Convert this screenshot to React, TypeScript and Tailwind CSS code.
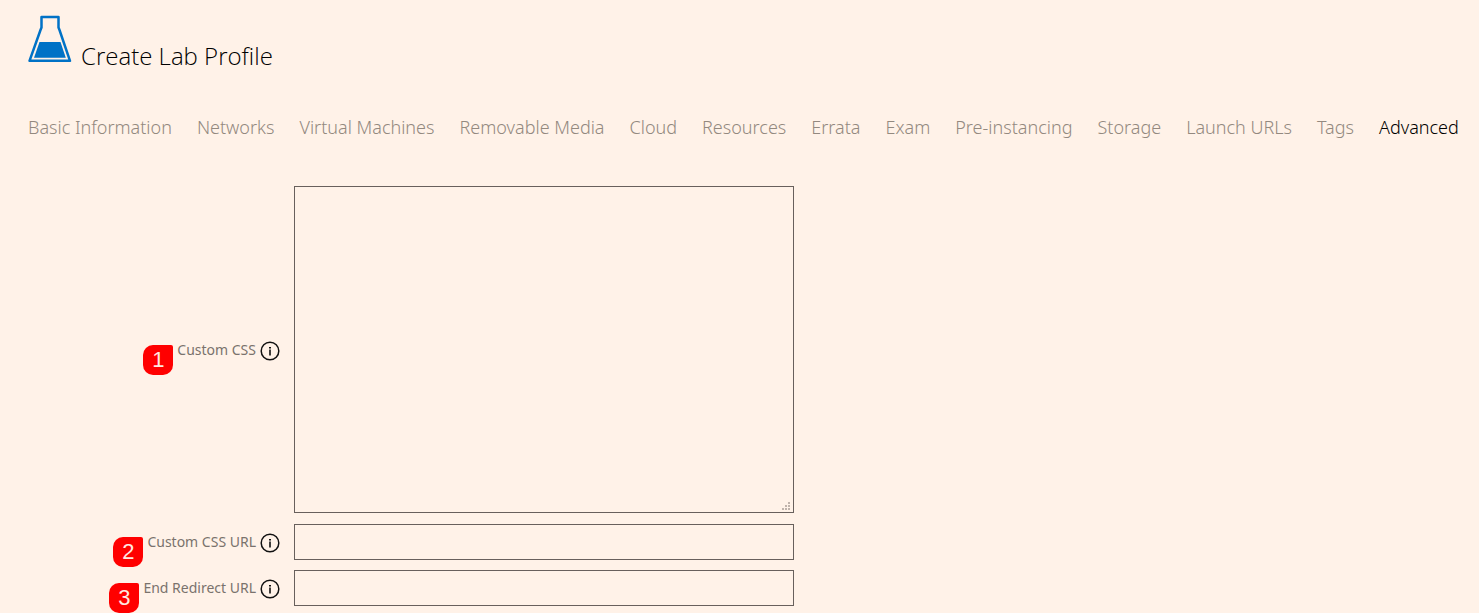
import React from "react";

const tabs = [
  "Basic Information",
  "Networks",
  "Virtual Machines",
  "Removable Media",
  "Cloud",
  "Resources",
  "Errata",
  "Exam",
  "Pre-instancing",
  "Storage",
  "Launch URLs",
  "Tags",
  "Advanced",
];

function FlaskIcon() {
  return (
    <svg width="44" height="48" viewBox="0 0 44 48" aria-hidden="true" className="shrink-0">
      <path
        d="M13.5 2h17v10.5L31.5 15 42 45.8H1.5L12.5 15l1-2.5z"
        fill="none"
        stroke="#0072c6"
        strokeWidth="2.5"
        strokeLinejoin="round"
      />
      <path d="M11.5 27h21l5.3 15.8H6z" fill="#0072c6" />
    </svg>
  );
}

function InfoIcon() {
  return (
    <svg width="20" height="20" viewBox="0 0 20 20" aria-hidden="true">
      <circle cx="10" cy="10" r="8.8" fill="none" stroke="#111" strokeWidth="1.5" />
      <rect x="9" y="6" width="2" height="1.5" fill="#111" />
      <rect x="9.2" y="8.5" width="1.6" height="6" fill="#111" />
    </svg>
  );
}

function FieldLabel({ id, step, text }: { id: string; step: number; text: string }) {
  return (
    <div className="flex items-center justify-end gap-1">
      <label
        htmlFor={id}
        className="relative font-['Noto_Sans',sans-serif] text-sm leading-5 text-[#7a726d]"
      >
        <span className="absolute top-[5px] right-full mr-1 flex size-[30px] items-center justify-center rounded-[10px] rounded-tr-[2px] bg-[#ff0000] font-['Liberation_Sans',sans-serif] text-[22px] text-[#ffe8e0]">
          {step}
        </span>
        {text}
      </label>
      <button type="button" aria-label={`About ${text}`} className="pt-px">
        <InfoIcon />
      </button>
    </div>
  );
}

export default function App() {
  return (
    <main className="min-h-screen bg-[#fff2e8] px-7 pt-[15px] font-['Open_Sans',sans-serif]">
      <header className="flex items-start gap-[9px]">
        <FlaskIcon />
        <h1 className="pt-[25px] text-2xl leading-8 font-light text-black">Create Lab Profile</h1>
      </header>
      <nav className="mt-[39px] flex gap-[25px] font-['Noto_Sans',sans-serif] text-lg leading-8 font-light whitespace-nowrap text-[#93897f]">
        {tabs.map((tab) => (
          <a
            key={tab}
            href="#"
            aria-current={tab === "Advanced" ? "page" : undefined}
            className="aria-[current=page]:text-black"
          >
            {tab}
          </a>
        ))}
      </nav>
      <form className="mt-[43px] grid grid-cols-[252px_minmax(0,500px)] gap-x-[14px] gap-y-[10px]">
        <FieldLabel id="css" step={1} text="Custom CSS" />
        <div className="relative pb-px">
          <textarea
            id="css"
            className="block h-[327px] w-full resize border border-[#68605c] bg-transparent p-2 text-sm [&::-webkit-resizer]:bg-transparent"
          />
          <svg
            width="8"
            height="8"
            viewBox="0 0 8 8"
            fill="#c0b4ac"
            aria-hidden="true"
            className="pointer-events-none absolute right-1 bottom-1"
          >
            <path d="M6 0h2v2H6zM3 3h2v2H3zM6 3h2v2H6zM0 6h2v2H0zM3 6h2v2H3zM6 6h2v2H6z" />
          </svg>
        </div>
        <FieldLabel id="css-url" step={2} text="Custom CSS URL" />
        <input
          id="css-url"
          type="text"
          className="h-9 w-full border border-[#68605c] bg-transparent px-2 text-sm"
        />
        <FieldLabel id="redirect-url" step={3} text="End Redirect URL" />
        <input
          id="redirect-url"
          type="text"
          className="h-9 w-full border border-[#68605c] bg-transparent px-2 text-sm"
        />
      </form>
    </main>
  );
}
